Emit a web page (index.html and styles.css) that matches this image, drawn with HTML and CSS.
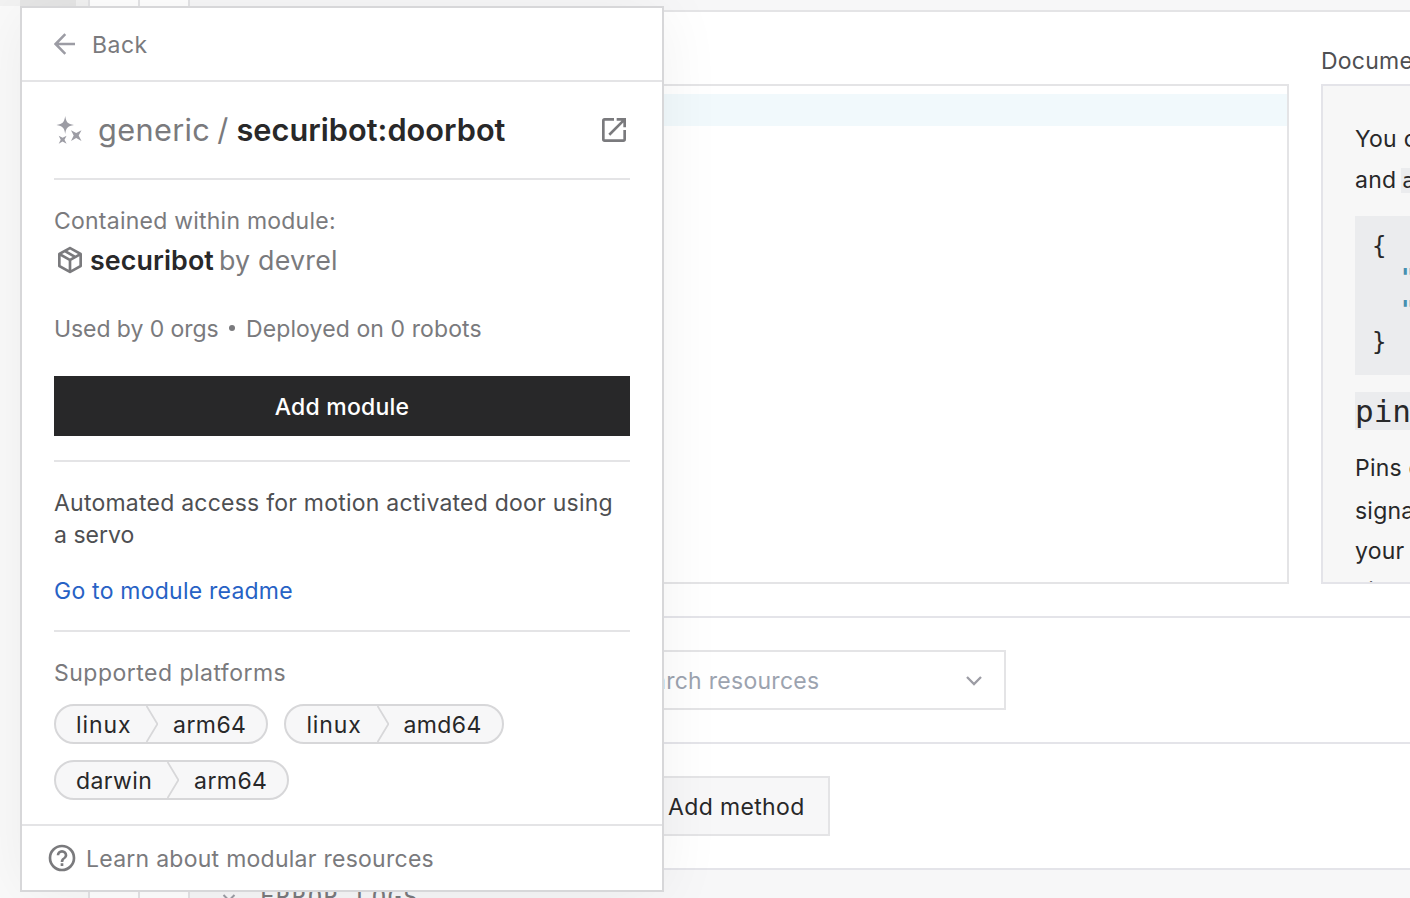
FILE: index.html
```html
<!DOCTYPE html>
<html lang="en">
<head>
<meta charset="utf-8">
<title>Builder</title>
<link rel="stylesheet" href="styles.css">
</head>
<body>
<div class="app">
  <aside class="sidebar"><div class="sidebar-top"><div class="sidebar-active"></div></div></aside>
  <div class="rail"></div>
  <div class="rail"></div>
  <main class="main">
    <div class="topbar"></div>
    <section class="config">
      <div class="editor"><div class="active-line"></div></div>
      <div class="docs">
        <div class="docs-label">Documentation</div>
        <div class="docs-body">
          <p class="doc-line">You can</p>
          <p class="doc-line">and <code class="inline-code">attributes</code></p>
          <pre class="code">{
  <span class="key">"pin"</span>
  <span class="key">"min"</span>
}</pre>
          <h3 class="doc-heading"><code>pins</code></h3>
          <p class="doc-line pins">Pins of</p>
          <p class="doc-line signal">signals</p>
          <p class="doc-line your">your</p>
          <p class="doc-line">circuit</p>
        </div>
      </div>
    </section>
    <section class="row">
      <div class="select"><span class="t search">Search resources</span>
        <svg class="chevron" viewBox="0 0 18 12"><path d="M2 2l7 7 7-7"/></svg>
      </div>
    </section>
    <section class="row">
      <button class="method"><span class="t">Add method</span></button>
    </section>
    <section class="logs">
      <svg class="logs-icon" viewBox="0 0 14 10"><path d="M1.500 1l5.500 5.500L12.500 1"/></svg>
      <span class="logs-title">ERROR LOGS</span>
    </section>
  </main>

  <div class="popover">
    <header class="back">
      <svg class="arrow" viewBox="0 0 22 22"><path d="M21 11H1.800M11.300 1.200L1.600 11l9.700 9.800"/></svg>
      <span class="t back-text">Back</span>
    </header>
    <div class="content">
      <div class="title">
        <svg class="sparkle" viewBox="0 0 26 28"><path d="M9.200 0c.9 6 2.300 8 8.800 9-6.500 1-7.900 3-8.800 9-.9-6-2.300-8-8.800-9 6.500-1 7.900-3 8.800-9zM15 14.200l5.200 2.800 5.300-2.800-2.800 5.300 2.800 5.400-5.300-2.800-5.200 2.800 2.700-5.400zM2.700 19.700l3.900 2.100 4-2.100-2.100 4 2.100 4-4-2.100-3.900 2.100 2-4z"/></svg>
        <span class="t generic">generic</span><span class="t slash">/</span><span class="t name">securibot:doorbot</span>
        <svg class="icon open" viewBox="0 0 24 24"><path d="M14 3v2h3.590l-9.830 9.830 1.410 1.410L19 6.410V10h2V3M19 19H5V5h7V3H5a2 2 0 0 0-2 2v14a2 2 0 0 0 2 2h14a2 2 0 0 0 2-2v-7h-2z"/></svg>
      </div>
      <div class="module">
        <div class="line contained">Contained within module:</div>
        <div class="module-name">
          <svg class="icon" viewBox="0 0 24 24"><path d="M21,16.5C21,16.88 20.79,17.21 20.47,17.38L12.57,21.82C12.41,21.94 12.21,22 12,22C11.79,22 11.59,21.94 11.43,21.82L3.53,17.38C3.21,17.21 3,16.88 3,16.5V7.5C3,7.12 3.21,6.79 3.53,6.62L11.43,2.18C11.59,2.06 11.79,2 12,2C12.21,2 12.41,2.06 12.57,2.18L20.47,6.62C20.79,6.79 21,7.12 21,7.5V16.5M12,4.15L10.11,5.22L16,8.61L17.96,7.5L12,4.15M6.04,7.5L12,10.85L13.96,9.75L8.08,6.35L6.04,7.5M5,15.91L11,19.29V12.58L5,9.21V15.91M19,15.91V9.21L13,12.58V19.29L19,15.91Z"/></svg>
          <span class="t modname">securibot</span><span class="t by">by devrel</span>
        </div>
        <div class="usage"><span class="t used">Used by 0 orgs</span><i class="dot"></i><span class="t deployed">Deployed on 0 robots</span></div>
        <button class="add"><span class="t">Add module</span></button>
      </div>
      <div class="about">
        <p class="desc">Automated access for motion activated door using <span class="tail">a servo</span></p>
        <a class="readme">Go to module readme</a>
      </div>
      <div class="platforms">
        <div class="line supported">Supported platforms</div>
        <div class="tags">
          <div class="tag"><span class="t linux">linux</span><svg class="sep" viewBox="0 0 12 36"><path d="M.6 0l10.800 18L.6 36"/></svg><span class="t">arm64</span></div>
          <div class="tag"><span class="t linux">linux</span><svg class="sep" viewBox="0 0 12 36"><path d="M.6 0l10.800 18L.6 36"/></svg><span class="t">amd64</span></div>
          <div class="tag"><span class="t">darwin</span><svg class="sep" viewBox="0 0 12 36"><path d="M.6 0l10.800 18L.6 36"/></svg><span class="t">arm64</span></div>
        </div>
      </div>
    </div>
    <footer class="learn">
      <svg class="icon" viewBox="0 0 24 24"><path d="M11,18H13V16H11V18M12,2A10,10 0 0,0 2,12A10,10 0 0,0 12,22A10,10 0 0,0 22,12A10,10 0 0,0 12,2M12,20C7.59,20 4,16.41 4,12C4,7.59 7.59,4 12,4C16.41,4 20,7.59 20,12C20,16.41 16.41,20 12,20M12,6A4,4 0 0,0 8,10H10A2,2 0 0,1 12,8A2,2 0 0,1 14,10C14,12 11,11.75 11,15H13C13,12.75 16,12.5 16,10A4,4 0 0,0 12,6Z"/></svg>
      <span class="t learn-text">Learn about modular resources</span>
    </footer>
  </div>
</div>
</body>
</html>
```

FILE: styles.css
```css
* { box-sizing: border-box; }
body {
  margin: 0;
  width: 1410px;
  height: 898px;
  overflow: hidden;
  background: #fff;
  color: #282829;
  font-family: "Inter", "Liberation Sans", sans-serif;
  font-size: 23px;
  font-weight: 400;
  line-height: 32px;
  letter-spacing: .23px;
}
p, h3, pre { margin: 0; }
button { font: inherit; letter-spacing: inherit; color: inherit; padding: 0; }
svg { fill: none; flex: none; }
.t { white-space: nowrap; margin-top: 2px; }
.icon { width: 32px; height: 32px; fill: #7a7a7d; }
.app { position: relative; display: flex; height: 898px; overflow: hidden; }
.sidebar { width: 88px; background: #fafafa; }
.sidebar-top { height: 6px; padding-left: 20px; background: #f2f2f2; }
.sidebar-active { width: 56px; height: 6px; background: #e6e6e6; }
.rail { width: 50px; border-left: 2px solid #e4e4e6; }
.main { flex: 1; min-width: 0; border-left: 2px solid #e4e4e6; overflow: hidden; }
.topbar { height: 12px; background: #f7f7f8; border-bottom: 2px solid #e4e4e6; }
.config { display: flex; gap: 32px; height: 606px; padding: 72px 0 32px 32px; border-bottom: 2px solid #e4e4e9; }
.editor { flex: none; width: 1067px; border: 2px solid #e4e4e6; padding-top: 8px; }
.active-line { height: 32px; background: #f1f9fc; }
.docs { flex: none; width: 500px; margin-top: -39px; }
.docs-label { height: 39px; color: #4e4f52; }
.docs-body { height: 500px; padding: 36px 32px; border: 2px solid #e4e4e9; background: #f7f7f7; overflow: hidden; }
.doc-line { height: 41px; padding-top: 1px; white-space: nowrap; }
.inline-code { margin-left: -2px; padding: 0 1px; background: #ebecee; font-family: "DejaVu Sans Mono", monospace; font-size: 22px; letter-spacing: 0; }
.code { height: 159px; margin-top: 12px; padding: 14px 17px; background: #ebecee; font: 24px/32px "DejaVu Sans Mono", monospace; letter-spacing: 0; }
.key { color: #458fb0; font-weight: 700; }
.doc-heading { height: 76px; padding-top: 17px; font-weight: 400; line-height: 38px; letter-spacing: 0; }
.doc-heading code { display: inline-block; background: #ebecee; font: 31px/38px "DejaVu Sans Mono", monospace; }
.pins { height: 43px; }
.signal { height: 40px; }
.your { height: 40px; }
.row { height: 126px; padding: 32px; border-bottom: 2px solid #e4e4e9; }
.select { display: flex; align-items: center; justify-content: space-between; width: 784px; height: 60px; padding: 0 21px 0 400px; border: 2px solid #e4e4e6; }
.search { color: #9ca3af; letter-spacing: .28px; }
.chevron { width: 18px; height: 12px; margin-top: 1px; stroke: #9c9ca4; stroke-width: 2.3; }
.method { display: flex; align-items: center; width: 208px; height: 60px; margin-left: 400px; padding-left: 44px; border: 2px solid #e4e4e6; background: #f7f7f8; letter-spacing: .35px; }
.logs { display: flex; gap: 26px; height: 60px; padding: 14px 32px; background: #f7f7f8; }
.logs-icon { width: 14px; height: 10px; margin-top: 7px; stroke: #9c9ca4; stroke-width: 2; }
.logs-title { color: #7a7a7d; font: 24px/28px "DejaVu Sans Mono", monospace; letter-spacing: 1.5px; margin-left: -2px; }
.logs-icon { align-self: flex-start; margin-top: 10px; }

.popover { position: absolute; left: 20px; top: 6px; width: 644px; height: 886px; border: 2px solid #d7d7d9; background: #fff; box-shadow: 0 4px 60px rgba(0,0,0,.06); color: #7a7a7d; }
.back { display: flex; align-items: center; gap: 16px; height: 74px; padding-left: 32px; border-bottom: 2px solid #e4e4e6; }
.back-text { letter-spacing: .5px; }
.arrow { width: 22px; height: 22px; stroke: #9c9ca4; stroke-width: 2.5; }
.content { padding: 0 32px; }
.title { display: flex; align-items: center; height: 98px; border-bottom: 2px solid #e4e4e6; font-size: 30.7px; line-height: 40px; }
.title .t, .module-name .t { margin-top: 0; }
.sparkle { width: 26px; height: 28px; margin: -1px 16px 0 2px; fill: #9c9ca4; }
.generic { letter-spacing: .35px; }
.slash { margin: 0 8px 0 7px; }
.name { color: #282829; font-weight: 600; letter-spacing: .03px; }
.open { margin-left: auto; }
.module { height: 282px; padding-top: 25px; border-bottom: 2px solid #e4e4e6; }
.line { height: 32px; }
.module-name { display: flex; align-items: center; height: 46px; font-size: 26.8px; }
.modname { margin-left: 4px; margin-right: 5px; color: #282829; font-weight: 600; letter-spacing: .1px; }
.used { letter-spacing: -.07px; }
.deployed { letter-spacing: .1px; }
.usage { display: flex; align-items: center; height: 32px; margin-top: 29px; }
.dot { width: 6px; height: 6px; margin: 0 11px 0 10.500px; border-radius: 3px; background: #7a7a7d; }
.add { display: flex; align-items: center; justify-content: center; width: 576px; height: 60px; margin-top: 32px; border: 0; background: #282829; color: #fff; font-weight: 500; }
.about { height: 170px; padding-top: 25px; border-bottom: 2px solid #e4e4e6; }
.desc { color: #4e4f52; }
.tail { letter-spacing: 0; }
.readme { display: block; margin-top: 24px; color: #2762c5; }
.platforms { height: 192px; padding-top: 25px; }
.supported { letter-spacing: .48px; }
.tags { display: flex; flex-wrap: wrap; gap: 16px; margin-top: 15px; }
.tag { display: flex; align-items: center; height: 40px; padding: 0 20px; border: 2px solid #d7d7d9; border-radius: 20px; background: #f7f7f8; color: #282829; letter-spacing: .42px; }
.linux { letter-spacing: .9px; }
.sep { width: 12px; height: 36px; margin: 0 14.700px 0 15px; stroke: #d7d7d9; stroke-width: 1.700; }
.learn { display: flex; align-items: center; gap: 8px; height: 66px; padding-left: 24px; border-top: 2px solid #e4e4e6; }
.learn-text { letter-spacing: .26px; }
```
